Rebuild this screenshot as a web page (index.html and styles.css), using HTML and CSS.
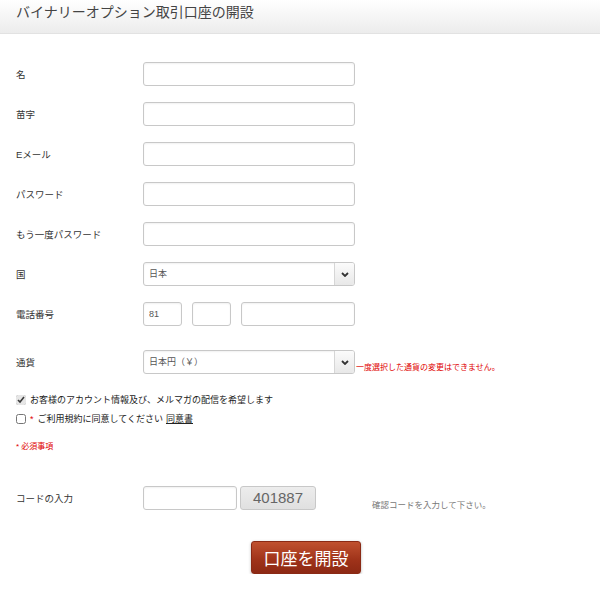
FILE: index.html
```html
<!DOCTYPE html>
<html lang="ja">
<head>
    <meta charset="UTF-8">
    <title>バイナリーオプション取引口座の開設</title>
    <link rel="stylesheet" href="styles.css">
</head>
<body>
    <div class="page-head">
        <h1>バイナリーオプション取引口座の開設</h1>
    </div>

    <form class="signup">
        <div class="row">
            <label class="row-label">名</label>
            <input type="text" class="field">
        </div>
        <div class="row">
            <label class="row-label">苗字</label>
            <input type="text" class="field">
        </div>
        <div class="row">
            <label class="row-label">Eメール</label>
            <input type="text" class="field">
        </div>
        <div class="row">
            <label class="row-label">パスワード</label>
            <input type="password" class="field">
        </div>
        <div class="row">
            <label class="row-label">もう一度パスワード</label>
            <input type="password" class="field">
        </div>
        <div class="row">
            <label class="row-label">国</label>
            <div class="select-wrap">
                <select class="field select">
                    <option>日本</option>
                </select>
                <span class="select-arrow">
                    <svg width="8" height="5" viewBox="0 0 8 5"><path d="M1 1 L4 4 L7 1" fill="none" stroke="#333" stroke-width="1.8"/></svg>
                </span>
            </div>
        </div>
        <div class="row">
            <label class="row-label">電話番号</label>
            <div class="phone">
                <input type="text" class="field phone-code" value="81">
                <input type="text" class="field phone-area">
                <input type="text" class="field phone-num">
            </div>
        </div>
        <div class="row row-currency">
            <label class="row-label">通貨</label>
            <div class="select-wrap">
                <select class="field select">
                    <option>日本円（￥）</option>
                </select>
                <span class="select-arrow">
                    <svg width="8" height="5" viewBox="0 0 8 5"><path d="M1 1 L4 4 L7 1" fill="none" stroke="#333" stroke-width="1.8"/></svg>
                </span>
            </div>
            <span class="note">一度選択した通貨の変更はできません。</span>
        </div>

        <div class="checks">
            <label class="check">
                <input type="checkbox" checked>
                お客様のアカウント情報及び、メルマガの配信を希望します
            </label>
            <label class="check">
                <input type="checkbox">
                <span class="req">*</span> ご利用規約に同意してください <a href="#">同意書</a>
            </label>
        </div>

        <p class="required">* 必須事項</p>

        <div class="row row-code">
            <label class="row-label">コードの入力</label>
            <input type="text" class="field code-input">
            <span class="captcha">401887</span>
            <span class="hint">確認コードを入力して下さい。</span>
        </div>

        <div class="actions">
            <button type="submit" class="submit">口座を開設</button>
        </div>
    </form>
</body>
</html>
```

FILE: styles.css
```css
body {
    margin: 0;
    font-family: "Liberation Sans", "Noto Sans CJK JP", sans-serif;
    font-size: 9.5px;
    color: #333;
    background: #fff;
}

.page-head {
    height: 33px;
    background: linear-gradient(#ffffff, #ececec);
    border-bottom: 1px solid #e2e2e2;
}

.page-head h1 {
    margin: 0;
    padding: 2px 0 0 16px;
    font-size: 14px;
    font-weight: normal;
    color: #444;
    line-height: 20px;
}

.signup {
    padding: 28px 0 0 16px;
}

.row {
    display: flex;
    align-items: center;
    height: 24px;
    margin-bottom: 16px;
}

.row-label {
    width: 127px;
    flex-shrink: 0;
    color: #333;
}

.field {
    box-sizing: border-box;
    width: 212px;
    height: 24px;
    margin: 0;
    padding: 0 5px;
    border: 1px solid #c8c8c8;
    border-radius: 3px;
    background: #fff;
    font-family: inherit;
    font-size: 9px;
    color: #555;
    box-shadow: inset 0 1px 2px rgba(0,0,0,0.06);
}

.select-wrap {
    position: relative;
    width: 212px;
    height: 24px;
}

.select {
    appearance: none;
    -webkit-appearance: none;
    outline: none;
}

.select-arrow {
    position: absolute;
    top: 1px;
    right: 1px;
    width: 19px;
    height: 22px;
    border-left: 1px solid #d6d6d6;
    background: linear-gradient(#fbfbfb, #e8e8e8);
    display: flex;
    align-items: center;
    justify-content: center;
    border-radius: 0 2px 2px 0;
}

.phone {
    display: flex;
    gap: 10px;
}

.phone-code,
.phone-area {
    width: 39px;
}

.phone-num {
    width: 114px;
}

/* sibling margins collapse, so this has to beat the 16px above */
.row-currency {
    margin-top: 24px;
}

.note {
    align-self: flex-end;
    color: #e00000;
    font-size: 8px;
    margin-bottom: 2px;
    margin-left: 1px;
    white-space: nowrap;
}

.checks {
    margin-top: 0;
}

.check {
    display: flex;
    align-items: center;
    height: 19px;
    font-size: 9px;
    color: #222;
}

.check input {
    width: 10px;
    height: 10px;
    margin: 0 4px 0 0;
    accent-color: #e6e6e6;
}

.req {
    color: #e00000;
    margin-right: 4px;
}

.check a {
    color: #222;
    margin-left: 3px;
}

.required {
    margin: 12px 0 0;
    color: #e00000;
    font-size: 8px;
}

.row-code {
    margin-top: 35px;
}

.code-input {
    width: 94px;
}

.captcha {
    box-sizing: border-box;
    width: 76px;
    height: 24px;
    margin-left: 3px;
    border: 1px solid #c8c8c8;
    border-radius: 3px;
    background: linear-gradient(#ededed, #e0e0e0);
    color: #666;
    font-size: 15px;
    text-align: center;
    line-height: 22px;
}

.hint {
    align-self: flex-end;
    margin-left: 56px;
    margin-bottom: 0;
    font-size: 8.5px;
    color: #777;
}

.actions {
    padding-left: 235px;
    margin-top: 31px;
}

.submit {
    width: 110px;
    height: 33px;
    border: 1px solid #8a2a15;
    border-radius: 3px;
    background: linear-gradient(#c0512f, #9e3219 60%, #8d2914);
    color: #fff;
    font-family: inherit;
    font-size: 17px;
    box-shadow: 0 1px 3px rgba(0,0,0,0.3);
    cursor: pointer;
}
```
